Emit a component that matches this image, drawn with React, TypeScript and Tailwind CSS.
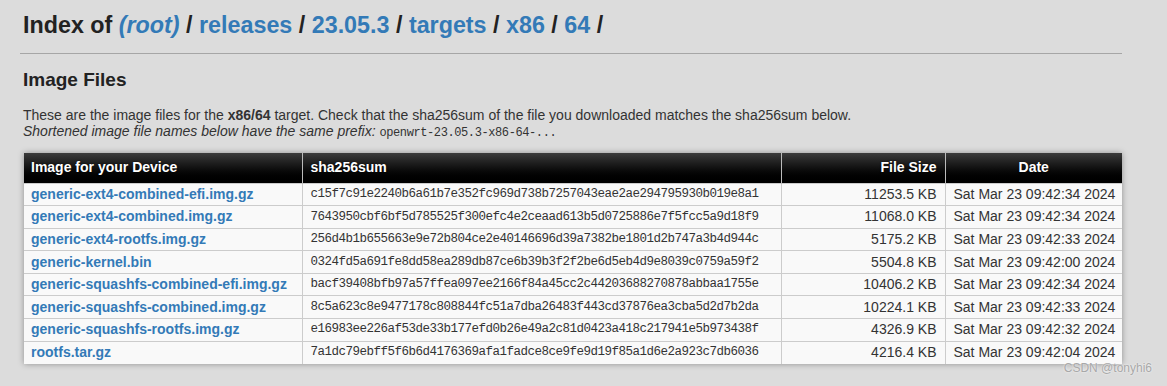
import React from 'react';

interface ImageRow {
    name: string;
    sha: string;
    size: string;
    date: string;
}

const rows: ImageRow[] = [
    { name: 'generic-ext4-combined-efi.img.gz', sha: 'c15f7c91e2240b6a61b7e352fc969d738b7257043eae2ae294795930b019e8a1', size: '11253.5 KB', date: 'Sat Mar 23 09:42:34 2024' },
    { name: 'generic-ext4-combined.img.gz', sha: '7643950cbf6bf5d785525f300efc4e2ceaad613b5d0725886e7f5fcc5a9d18f9', size: '11068.0 KB', date: 'Sat Mar 23 09:42:34 2024' },
    { name: 'generic-ext4-rootfs.img.gz', sha: '256d4b1b655663e9e72b804ce2e40146696d39a7382be1801d2b747a3b4d944c', size: '5175.2 KB', date: 'Sat Mar 23 09:42:33 2024' },
    { name: 'generic-kernel.bin', sha: '0324fd5a691fe8dd58ea289db87ce6b39b3f2f2be6d5eb4d9e8039c0759a59f2', size: '5504.8 KB', date: 'Sat Mar 23 09:42:00 2024' },
    { name: 'generic-squashfs-combined-efi.img.gz', sha: 'bacf39408bfb97a57ffea097ee2166f84a45cc2c44203688270878abbaa1755e', size: '10406.2 KB', date: 'Sat Mar 23 09:42:34 2024' },
    { name: 'generic-squashfs-combined.img.gz', sha: '8c5a623c8e9477178c808844fc51a7dba26483f443cd37876ea3cba5d2d7b2da', size: '10224.1 KB', date: 'Sat Mar 23 09:42:33 2024' },
    { name: 'generic-squashfs-rootfs.img.gz', sha: 'e16983ee226af53de33b177efd0b26e49a2c81d0423a418c217941e5b973438f', size: '4326.9 KB', date: 'Sat Mar 23 09:42:32 2024' },
    { name: 'rootfs.tar.gz', sha: '7a1dc79ebff5f6b6d4176369afa1fadce8ce9fe9d19f85a1d6e2a923c7db6036', size: '4216.4 KB', date: 'Sat Mar 23 09:42:04 2024' },
];

// breadcrumb link + separator
function Crumb({ label, italic }: { label: string; italic?: boolean }) {
    return (
        <>
            <a href="#" className={`text-[#337ab7] no-underline ${italic ? 'italic' : ''}`}>
                {label}
            </a>
            <span className="text-[#222]"> / </span>
        </>
    );
}

export default function App() {
    return (
        <div
            className="relative min-h-[386px] bg-[#dcdcdc] text-[#333] overflow-hidden"
            style={{ fontFamily: '"Liberation Sans", Arial, sans-serif' }}
        >
            <div className="ml-[20px] w-[1102px]">
                <h1 className="h-[50px] flex items-center pl-[3px] text-[23.3px] font-bold text-[#222] whitespace-pre">
                    <span>Index of </span>
                    <Crumb label="(root)" italic />
                    <Crumb label="releases" />
                    <Crumb label="23.05.3" />
                    <Crumb label="targets" />
                    <Crumb label="x86" />
                    <Crumb label="64" />
                </h1>
                <hr className="mt-[3px] border-0 border-t border-[#a6a6a6]" />

                <h2 className="mt-[13px] pl-[3px] text-[19px] leading-[26px] font-bold text-[#222]">Image Files</h2>
                <div className="mt-[14px] pl-[3px] text-[14px] leading-[16px]">
                    <p>
                        These are the image files for the <b>x86/64</b> target. Check that the sha256sum of the file you
                        downloaded matches the sha256sum below.
                    </p>
                    <p className="italic">
                        Shortened image file names below have the same prefix:{' '}
                        <code
                            className="not-italic text-[12px] tracking-[-0.4px]"
                            style={{ fontFamily: '"Liberation Mono", "Courier New", monospace' }}
                        >
                            openwrt-23.05.3-x86-64-...
                        </code>
                    </p>
                </div>

                <table className="mt-[12px] ml-[4px] w-[1098px] border-collapse table-fixed bg-[#f9f9f9] shadow-[0_0_6px_rgba(0,0,0,0.35)]">
                    <colgroup>
                        <col className="w-[278px]" />
                        <col className="w-[479px]" />
                        <col className="w-[164px]" />
                        <col className="w-[177px]" />
                    </colgroup>
                    <thead>
                        <tr className="h-[30px] bg-gradient-to-b from-[#3c3c3c] to-[#000] text-white text-[14px] font-bold [text-shadow:0_0_2px_rgba(0,0,0,0.8)]">
                            <th className="text-left pl-[7px] border-r border-[#bbb]">Image for your Device</th>
                            <th className="text-left pl-[8px] border-r border-[#bbb]">sha256sum</th>
                            <th className="text-right pr-[8px] border-r border-[#bbb]">File Size</th>
                            <th className="text-center">Date</th>
                        </tr>
                    </thead>
                    <tbody>
                        {rows.map((r) => (
                            <tr key={r.name} className="h-[22.6px] border-t border-[#ccc] text-[14px]">
                                <td className="pl-[7px] border-r border-[#ccc]">
                                    <a href="#" className="font-bold text-[#337ab7] no-underline">
                                        {r.name}
                                    </a>
                                </td>
                                <td
                                    className="pl-[8px] border-r border-[#ccc] text-[12.5px] tracking-[-0.5px] text-[#333]"
                                    style={{ fontFamily: '"Liberation Mono", "Courier New", monospace' }}
                                >
                                    {r.sha}
                                </td>
                                <td className="text-right pr-[8px] border-r border-[#ccc]">{r.size}</td>
                                <td className="pl-[8px]">{r.date}</td>
                            </tr>
                        ))}
                    </tbody>
                </table>
            </div>

            <div className="absolute right-[15px] bottom-[9px] text-[12px] text-[#a8a8a8] [text-shadow:0_0_2px_#fff]">
                CSDN @tonyhi6
            </div>
        </div>
    );
}
